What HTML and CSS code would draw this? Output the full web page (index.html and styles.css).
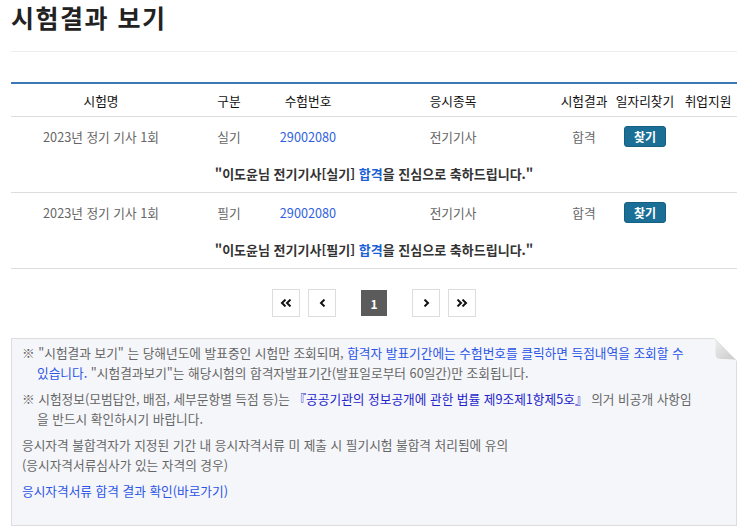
FILE: index.html
```html
<!DOCTYPE html>
<html lang="ko">
<head>
    <meta charset="UTF-8">
    <meta name="viewport" content="width=device-width, initial-scale=1.0">
    <title>시험결과 보기</title>
    <link rel="stylesheet" href="styles.css">
</head>
<body>
    <div class="content">
        <h2 class="page-title">시험결과 보기</h2>

        <table class="result-table">
            <colgroup>
                <col class="c-name">
                <col class="c-type">
                <col class="c-no">
                <col class="c-item">
                <col class="c-result">
                <col class="c-job">
                <col class="c-support">
            </colgroup>
            <thead>
                <tr>
                    <th>시험명</th>
                    <th>구분</th>
                    <th>수험번호</th>
                    <th>응시종목</th>
                    <th>시험결과</th>
                    <th>일자리찾기</th>
                    <th>취업지원</th>
                </tr>
            </thead>
            <tbody>
                <tr class="data-row">
                    <td>2023년 정기 기사 1회</td>
                    <td>실기</td>
                    <td><a href="#" class="exam-no">29002080</a></td>
                    <td>전기기사</td>
                    <td>합격</td>
                    <td><button class="btn-find">찾기</button></td>
                    <td></td>
                </tr>
                <tr class="msg-row">
                    <td colspan="7">"이도윤님 전기기사[실기] <span class="pass">합격</span>을 진심으로 축하드립니다."</td>
                </tr>
                <tr class="data-row">
                    <td>2023년 정기 기사 1회</td>
                    <td>필기</td>
                    <td><a href="#" class="exam-no">29002080</a></td>
                    <td>전기기사</td>
                    <td>합격</td>
                    <td><button class="btn-find">찾기</button></td>
                    <td></td>
                </tr>
                <tr class="msg-row">
                    <td colspan="7">"이도윤님 전기기사[필기] <span class="pass">합격</span>을 진심으로 축하드립니다."</td>
                </tr>
            </tbody>
        </table>

        <div class="paging">
            <a href="#" class="page-btn"><svg width="12" height="8" viewBox="0 0 12 8"><path d="M5.5 0.6 L2 4 L5.5 7.4 M10.5 0.6 L7 4 L10.5 7.4" fill="none" stroke="#111" stroke-width="2"/></svg></a>
            <a href="#" class="page-btn"><svg width="7" height="8" viewBox="0 0 7 8"><path d="M5.5 0.6 L2 4 L5.5 7.4" fill="none" stroke="#111" stroke-width="2"/></svg></a>
            <span class="page-btn current">1</span>
            <a href="#" class="page-btn"><svg width="7" height="8" viewBox="0 0 7 8"><path d="M1.5 0.6 L5 4 L1.5 7.4" fill="none" stroke="#111" stroke-width="2"/></svg></a>
            <a href="#" class="page-btn"><svg width="12" height="8" viewBox="0 0 12 8"><path d="M1.5 0.6 L5 4 L1.5 7.4 M6.5 0.6 L10 4 L6.5 7.4" fill="none" stroke="#111" stroke-width="2"/></svg></a>
        </div>

        <div class="notice">
            <svg class="fold" width="23" height="23" viewBox="0 0 23 23">
                <defs>
                    <linearGradient id="foldGrad" x1="0" y1="0" x2="1" y2="1">
                        <stop offset="0" stop-color="#eeeeee"/>
                        <stop offset="1" stop-color="#c9c9c9"/>
                    </linearGradient>
                </defs>
                <path d="M0 0 L23 0 L23 23 Z" fill="#fff"/>
                <path d="M1 1 L22 22 C16 20.5 7 22.5 2.5 19.5 C0 15 3 7 1 1 Z" fill="url(#foldGrad)"/>
                <path d="M1 1 L22 22" stroke="#e2e2e2" stroke-width="1"/>
            </svg>
            <p class="note">※ "시험결과 보기" 는 당해년도에 발표중인 시험만 조회되며, <span class="link">합격자 발표기간에는 수험번호를 클릭하면 득점내역을 조회할 수<br>있습니다.</span> "시험결과보기"는 해당시험의 합격자발표기간(발표일로부터 60일간)만 조회됩니다.</p>
            <p class="note">※ 시험정보(모범답안, 배점, 세부문항별 득점 등)는 <span class="law">『공공기관의 정보공개에 관한 법률 제9조제1항제5호』</span> 의거 비공개 사항임<br>을 반드시 확인하시기 바랍니다.</p>
            <p>응시자격 불합격자가 지정된 기간 내 응시자격서류 미 제출 시 필기시험 불합격 처리됨에 유의<br>(응시자격서류심사가 있는 자격의 경우)</p>
            <p><a href="#" class="link">응시자격서류 합격 결과 확인(바로가기)</a></p>
        </div>
    </div>
</body>
</html>
```

FILE: styles.css
```css
body { margin: 0; padding: 0; background-color: #fff; font-family: "Noto Sans CJK KR", "Noto Sans", sans-serif; color: #666; font-size: 12.7px; }
a { text-decoration: none; }
.content { width: 726px; margin-left: 11px; }

.page-title {
    margin: 0 0 30px 0;
    padding: 1px 0 18px 0;
    font-size: 25px;
    line-height: 32px;
    letter-spacing: 1.5px;
    font-weight: bold;
    color: #222;
    border-bottom: 1px solid #eee;
}

.result-table { width: 726px; border-collapse: collapse; table-layout: fixed; }
.result-table .c-name { width: 180px; }
.result-table .c-type { width: 76px; }
.result-table .c-no { width: 82px; }
.result-table .c-item { width: 208px; }
.result-table .c-result { width: 54px; }
.result-table .c-job { width: 68px; }
.result-table .c-support { width: 58px; }
.result-table th {
    height: 32px; padding: 0;
    border-top: 2px solid #3b78b5; border-bottom: 1px solid #ddd;
    font-size: 12.7px; font-weight: normal; color: #111;
    white-space: nowrap; text-align: center;
}
.result-table td { padding: 0; text-align: center; white-space: nowrap; color: #666; }
.data-row td { height: 38px; }
.msg-row td { height: 37px; border-bottom: 1px solid #ddd; font-size: 13px; font-weight: bold; color: #333; }
.exam-no { color: #2f62e0; }
.pass { color: #1a5fd6; }

.btn-find {
    width: 42px; height: 21px; padding: 0;
    background-color: #1b6f97; border: 1px solid #155f80; border-radius: 3px;
    color: #fff; font-family: inherit; font-size: 12px; font-weight: bold;
    cursor: pointer;
}

.paging { display: flex; justify-content: center; align-items: center; margin-top: 20px; height: 28px; }
.page-btn {
    display: flex; align-items: center; justify-content: center;
    width: 26px; height: 26px; margin: 0 4px;
    border: 1px solid #ddd; background: #fff;
}
.page-btn.current {
    width: 26px; height: 26px; border: none; margin: 0 21px;
    background-color: #5b5b5b; color: #fff; font-weight: bold; font-size: 12px;
}

.notice {
    position: relative;
    margin-top: 21px;
    height: 162px;
    padding: 4px 20px 20px 10px;
    background-color: #f5f6fa;
    border: 1px solid #ddd;
    line-height: 20px;
}
.notice p { margin: 0 0 6px 0; }
.notice .note { padding-left: 15px; text-indent: -15px; }
.notice .link { color: #2b55e6; }
.notice .law { color: #1f1fcc; }
.fold { position: absolute; top: -1px; right: -1px; }
```
